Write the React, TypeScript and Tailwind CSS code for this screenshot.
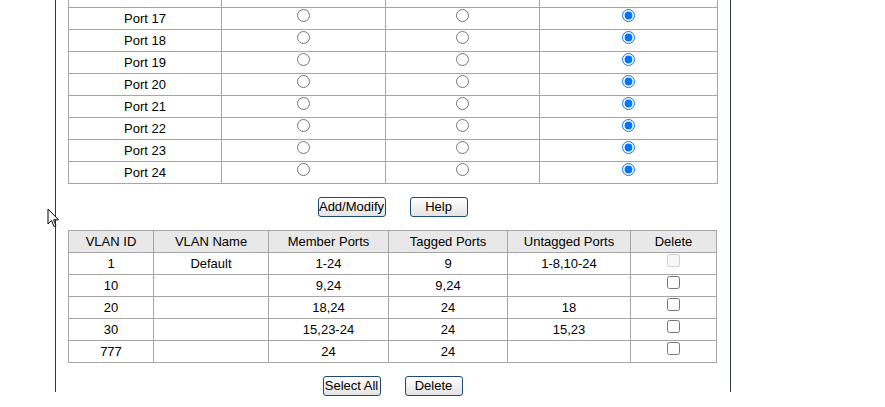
import React from "react";

const ports = [16, 17, 18, 19, 20, 21, 22, 23, 24];

const vlans = [
  { id: "1", name: "Default", member: "1-24", tagged: "9", untagged: "1-8,10-24", locked: true },
  { id: "10", name: "", member: "9,24", tagged: "9,24", untagged: "", locked: false },
  { id: "20", name: "", member: "18,24", tagged: "24", untagged: "18", locked: false },
  { id: "30", name: "", member: "15,23-24", tagged: "24", untagged: "15,23", locked: false },
  { id: "777", name: "", member: "24", tagged: "24", untagged: "", locked: false },
];

const cell = "border border-[#a6a6a6] h-[22px] p-0 text-center align-middle";

function Btn({ label, w }: { label: string; w: string }) {
  return (
    <button
      className={`${w} h-[20px] rounded-[3px] border border-[#1e4a72] bg-gradient-to-b from-white to-[#e3e3e3] text-[13px] leading-[18px] text-black`}
    >
      {label}
    </button>
  );
}

export default function App() {
  return (
    <div className="relative h-screen overflow-hidden bg-white font-['Liberation_Sans',Arial,sans-serif] text-[13px] text-black">
      <div className="ml-[55px] h-full w-[676px] border-x border-[#2f3b3b] pl-[12px]">
        {/* port membership table */}
        <table className="-mt-[15px] w-[649px] table-fixed border-collapse">
          <colgroup>
            <col className="w-[153px]" />
            <col className="w-[164px]" />
            <col className="w-[154px]" />
            <col className="w-[178px]" />
          </colgroup>
          <tbody>
            {ports.map((p) => (
              <tr key={p}>
                <td className={cell}>{p === 16 ? "" : `Port ${p}`}</td>
                <td className={cell}>
                  {p !== 16 && <input type="radio" name={`p${p}`} readOnly className="m-0 align-[1px]" />}
                </td>
                <td className={cell}>
                  {p !== 16 && <input type="radio" name={`p${p}`} readOnly className="m-0 align-[1px]" />}
                </td>
                <td className={cell}>
                  {p !== 16 && (
                    <input type="radio" name={`p${p}`} defaultChecked className="m-0 align-[1px]" />
                  )}
                </td>
              </tr>
            ))}
          </tbody>
        </table>

        <div className="flex w-[649px] justify-center gap-[24px] pt-[13px] pb-[13px]">
          <Btn label="Add/Modify" w="w-[68px]" />
          <Btn label="Help" w="w-[58px]" />
        </div>

        {/* vlan list */}
        <table className="w-[649px] table-fixed border-collapse">
          <colgroup>
            <col className="w-[85px]" />
            <col className="w-[115px]" />
            <col className="w-[120px]" />
            <col className="w-[119px]" />
            <col className="w-[123px]" />
            <col className="w-[86px]" />
          </colgroup>
          <thead>
            <tr className="bg-[#e8e8e8]">
              <th className={`${cell} font-normal`}>VLAN ID</th>
              <th className={`${cell} font-normal`}>VLAN Name</th>
              <th className={`${cell} font-normal`}>Member Ports</th>
              <th className={`${cell} font-normal`}>Tagged Ports</th>
              <th className={`${cell} font-normal`}>Untagged Ports</th>
              <th className={`${cell} font-normal`}>Delete</th>
            </tr>
          </thead>
          <tbody>
            {vlans.map((v) => (
              <tr key={v.id}>
                <td className={cell}>{v.id}</td>
                <td className={cell}>{v.name}</td>
                <td className={cell}>{v.member}</td>
                <td className={cell}>{v.tagged}</td>
                <td className={cell}>{v.untagged}</td>
                <td className={cell}>
                  <input type="checkbox" disabled={v.locked} className="m-0 align-[1px]" />
                </td>
              </tr>
            ))}
          </tbody>
        </table>

        <div className="flex w-[649px] justify-center gap-[24px] pt-[13px]">
          <Btn label="Select All" w="w-[58px]" />
          <Btn label="Delete" w="w-[58px]" />
        </div>
      </div>

      {/* mouse pointer */}
      <svg className="absolute left-[47px] top-[208px]" width="13" height="21" viewBox="0 0 13 21">
        <path
          d="M1 1 L1 16 L4.5 12.5 L7 18.5 L9 17.6 L6.6 11.8 L11.5 11.8 Z"
          fill="white"
          stroke="black"
          strokeWidth="1"
          strokeLinejoin="round"
        />
      </svg>
    </div>
  );
}
